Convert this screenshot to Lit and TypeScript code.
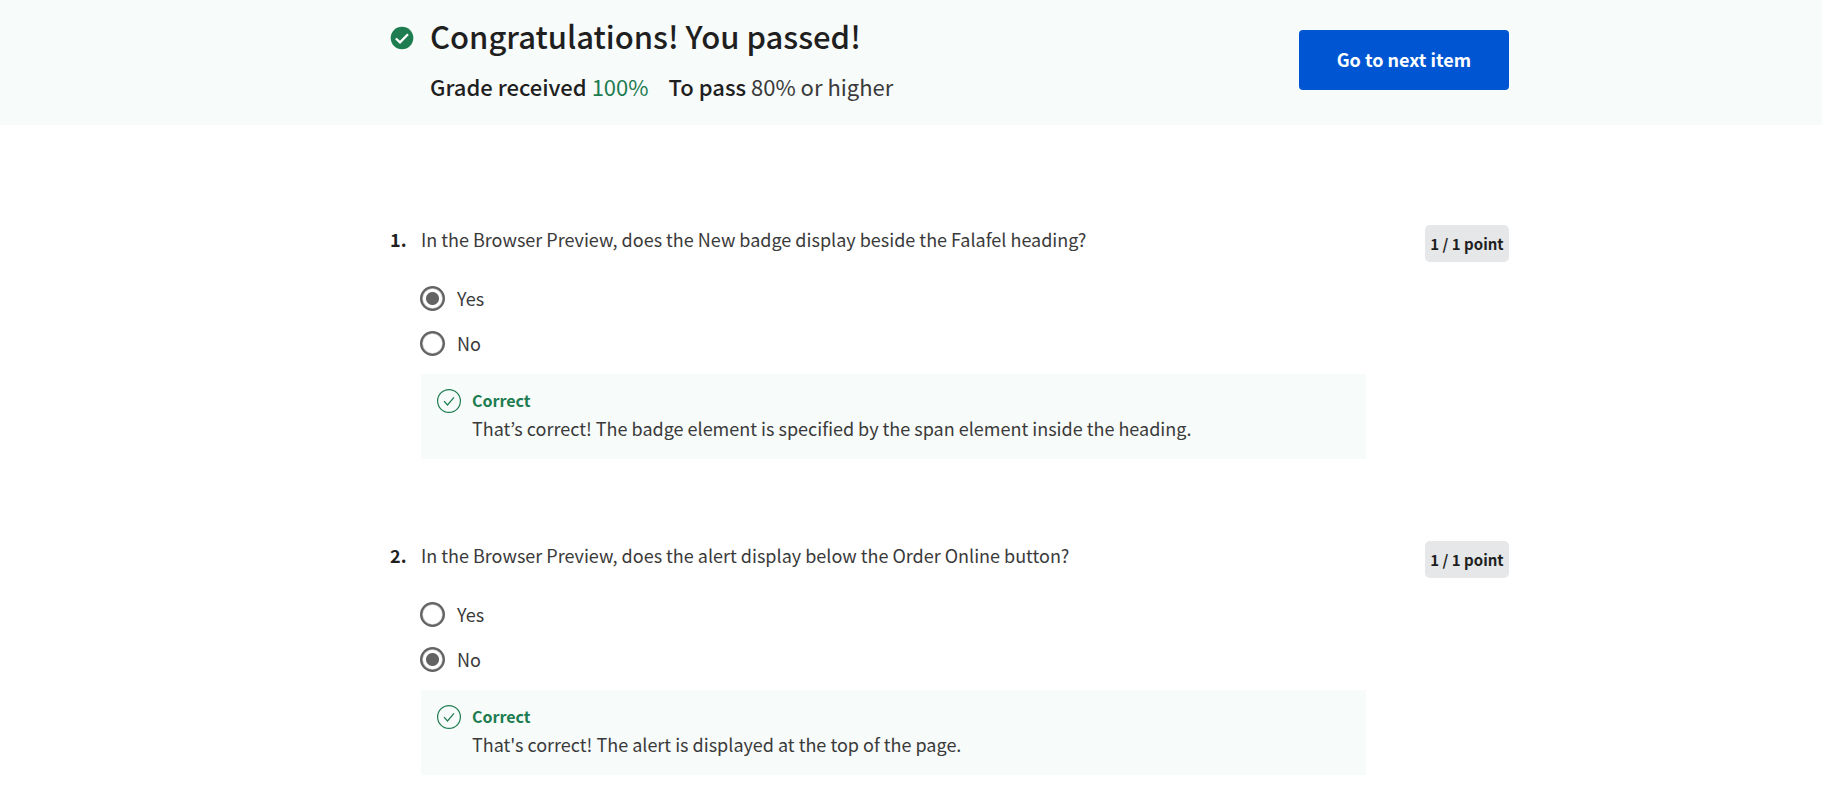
import { LitElement, html, css, svg } from "lit";
import { customElement, property } from "lit/decorators.js";

interface Question {
  text: string;
  options: string[];
  selected: number;
  feedback: string;
}

const QUESTIONS: Question[] = [
  {
    text: "In the Browser Preview, does the New badge display beside the Falafel heading?",
    options: ["Yes", "No"],
    selected: 0,
    feedback: "That’s correct! The badge element is specified by the span element inside the heading.",
  },
  {
    text: "In the Browser Preview, does the alert display below the Order Online button?",
    options: ["Yes", "No"],
    selected: 1,
    feedback: "That's correct! The alert is displayed at the top of the page.",
  },
];

@customElement("quiz-question")
export class QuizQuestion extends LitElement {
  @property({ type: Number }) number = 1;
  @property({ attribute: false }) question!: Question;

  static styles = css`
    :host {
      display: grid;
      grid-template-columns: 31px minmax(0, 1fr) auto;
      align-items: start;
      font-size: 18px;
      line-height: 28px;
      color: #3a3a3a;
    }
    .number {
      color: #1f1f1f;
      font-weight: 700;
    }
    .prompt {
      margin: 0;
    }
    .points {
      box-sizing: border-box;
      width: 84px;
      padding: 5px 0 4px;
      border-radius: 5px;
      background: #e5e7e8;
      color: #1f1f1f;
      font-size: 15px;
      font-weight: 700;
      text-align: center;
      white-space: nowrap;
    }
    .body {
      grid-column: 2 / -1;
      margin-right: 143px;
    }
    .options {
      display: grid;
      gap: 17px;
      margin: 0;
      padding: 22px 0 17px;
      border: 0;
    }
    .option {
      display: flex;
      align-items: center;
      gap: 12px;
      width: fit-content;
      margin-left: -1px;
    }
    .radio {
      appearance: none;
      box-sizing: border-box;
      width: 25px;
      height: 25px;
      margin: 0;
      border: 2px solid #636363;
      border-radius: 50%;
      background: radial-gradient(circle, #fff 9px, #636363 11px);
    }
    .radio:checked {
      background: radial-gradient(circle, #636363 6px, #fff 7px, #fff 9px, #636363 11px);
    }
    .feedback {
      display: grid;
      grid-template-columns: 24px 1fr;
      gap: 11px;
      padding: 12px 16px 17px;
      background: #f7fbfa;
    }
    .tick {
      display: block;
      margin-top: 3px;
    }
    .verdict,
    .explanation {
      margin: 0;
    }
    .verdict {
      color: #1d7c50;
      font-size: 16px;
      font-weight: 700;
    }
  `;

  render() {
    const q = this.question;
    return html`
      <div class="number">${this.number}.</div>
      <p class="prompt" id="prompt">${q.text}</p>
      <div class="points">1 / 1 point</div>
      <div class="body">
        <fieldset class="options" aria-labelledby="prompt">
          ${q.options.map(
            (label, i) => html`
              <label class="option">
                <input class="radio" type="radio" name="answer" .checked=${i === q.selected} />
                ${label}
              </label>
            `
          )}
        </fieldset>
        <div class="feedback">
          <svg class="tick" width="24" height="24" viewBox="0 0 24 24" fill="none" stroke="#1d7c50" aria-hidden="true">
            ${svg`<circle cx="12" cy="12" r="11.4" stroke-width="1.2" /><path d="M7 12.1 10.5 16 17 8.3" stroke-width="1.2" />`}
          </svg>
          <div>
            <p class="verdict">Correct</p>
            <p class="explanation">${q.feedback}</p>
          </div>
        </div>
      </div>
    `;
  }
}

@customElement("app-root")
export class AppRoot extends LitElement {
  static styles = css`
    :host {
      display: block;
      min-height: 100vh;
      background: #fff;
      color: #1f1f1f;
      font-family: "Noto Sans CJK KR", "Noto Sans", sans-serif;
    }
    .banner,
    .questions {
      padding-right: 313px;
      padding-left: 390px;
    }
    .banner {
      display: flex;
      align-items: center;
      justify-content: space-between;
      padding-top: 14px;
      padding-bottom: 19px;
      background: #f7fbfa;
    }
    .result {
      display: grid;
      grid-template-columns: 24px auto;
      column-gap: 16px;
      row-gap: 12px;
      align-items: center;
      padding-bottom: 4px;
    }
    .badge {
      display: block;
      margin-top: 3px;
    }
    .title {
      margin: 0;
      font-size: 31px;
      font-weight: 500;
      line-height: 44px;
    }
    .grades {
      display: flex;
      grid-column: 2;
      gap: 20px;
      margin: 0;
      color: #3a3a3a;
      font-size: 22px;
      line-height: 32px;
    }
    .label {
      color: #1f1f1f;
      font-weight: 500;
    }
    .score {
      color: #1d7c50;
    }
    .next {
      box-sizing: border-box;
      height: 60px;
      padding: 0 38px 2px;
      border: 0;
      border-radius: 4px;
      background: #0056d2;
      color: #fff;
      font: 700 18px/28px "Noto Sans CJK KR", "Noto Sans", sans-serif;
    }
    .questions {
      display: grid;
      gap: 82px;
      padding-top: 100px;
      padding-bottom: 23px;
    }
    @media (max-width: 1400px) {
      .banner,
      .questions {
        padding-right: 32px;
        padding-left: 32px;
      }
    }
  `;

  render() {
    return html`
      <header class="banner">
        <div class="result">
          <svg class="badge" width="24" height="24" viewBox="0 0 24 24" aria-hidden="true">
            <circle cx="12" cy="12" r="11.3" fill="#1d7c50" />
            <path d="M5.9 12.5 10 16.4 18 8.3" fill="none" stroke="#fff" stroke-width="2.3" />
          </svg>
          <h1 class="title">Congratulations! You passed!</h1>
          <p class="grades">
            <span><span class="label">Grade received</span> <span class="score">100%</span></span>
            <span><span class="label">To pass</span> 80% or higher</span>
          </p>
        </div>
        <button class="next" type="button">Go to next item</button>
      </header>
      <main class="questions">
        ${QUESTIONS.map((q, i) => html`<quiz-question .number=${i + 1} .question=${q}></quiz-question>`)}
      </main>
    `;
  }
}
